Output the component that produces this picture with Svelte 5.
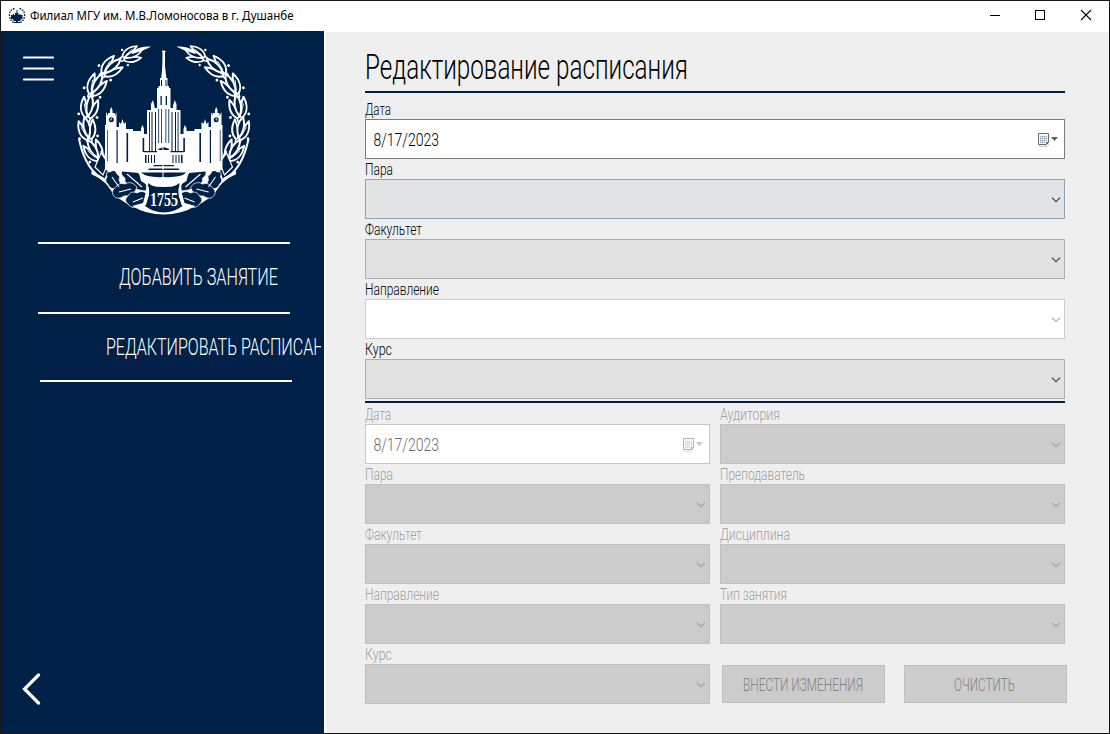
<script>
  const mainFields = [
    { label: 'Дата', w: 26, kind: 'date' },
    { label: 'Пара', w: 28, kind: 'focus' },
    { label: 'Факультет', w: 57, kind: 'normal' },
    { label: 'Направление', w: 74, kind: 'empty' },
    { label: 'Курс', w: 27, kind: 'normal' }
  ];
  const leftFields = [
    { label: 'Дата', w: 26, kind: 'date off' },
    { label: 'Пара', w: 28, kind: 'off' },
    { label: 'Факультет', w: 57, kind: 'off' },
    { label: 'Направление', w: 74, kind: 'off' },
    { label: 'Курс', w: 27, kind: 'off' }
  ];
  const rightFields = [
    { label: 'Аудитория', w: 60, kind: 'off' },
    { label: 'Преподаватель', w: 85, kind: 'off' },
    { label: 'Дисциплина', w: 70, kind: 'off' },
    { label: 'Тип занятия', w: 67, kind: 'off' }
  ];
  // x, y, rotation and scale of every laurel sprig of one half of the wreath
  const sprigs = [
    [122, 59, 66, 0.95],
    [102, 75.5, 48, 1.1],
    [90.5, 96, 27, 1.1],
    [87.5, 119.5, 8, 1.1],
    [89.5, 141, -12, 1.08],
    [100, 161, -31, 1.08]
  ];
</script>

{#snippet line(text, x, y, w, size, h)}
  <svg class="line" width={x + w + 2} height={h}>
    <text {x} {y} font-size={size} textLength={w} lengthAdjust="spacingAndGlyphs">{text}</text>
  </svg>
{/snippet}

{#snippet field(f)}
  <div class="field {f.kind}">
    <div class="label">{@render line(f.label, 0, 15.7, f.w, 17, 20)}</div>
    <div class="box">
      {#if f.kind.startsWith('date')}
        {@render line('8/17/2023', 7.5, 26, 65.5, 18, 38)}
        <svg class="cal" width="22" height="16" viewBox="0 0 22 16">
          <path d="M2 14.2h8l2-2" stroke="#bbb" fill="none" />
          <path d="M1.5 1.5h10v9l-2 2h-8z" fill="#f4f6f8" stroke="#75696a" />
          <path d="M9 13v-3h3z" fill="#75696a" />
          <path d="M3 4.5h7M3 6.5h7M3 8.5h7M3 10.5h5M3.5 4v7M5.5 4v7M7.5 4v7M9.5 4v5" stroke="#aebccb" stroke-width=".9" />
          <path class="arrow" d="M14 5h7l-3.5 4z" />
        </svg>
      {:else}
        <svg class="chev" width="10" height="6" viewBox="0 0 10 6"><path d="M1 .7l4 4 4-4" /></svg>
      {/if}
    </div>
  </div>
{/snippet}

{#snippet half()}
  {#each sprigs as [x, y, r, s]}
    <g transform="translate({x} {y}) rotate({r}) scale({s})" stroke-linejoin="round">
      <path d="M0 0C-8-4-9-12-6-20C-2-14-1-7 0 0ZM0 0C8-4 9-11 7-19C3-14 1-7 0 0Z" fill="#002147" stroke="#fff" stroke-width="1.8" />
      <path d="M-2-5L-5-14" stroke="#fff" stroke-width=".8" />
      <path d="M0-3C-4-10-3-17 0-23C4-17 4-10 0-3Z" fill="#002147" stroke="#fff" stroke-width="1.8" />
      <circle r="3" fill="#fff" /><circle r="1.5" fill="#002147" />
      <circle cx="-8.600" cy="-4" r="1.300" fill="#fff" /><circle cx="8.300" cy="-3" r="1.300" fill="#fff" />
    </g>
  {/each}
  <path d="M132 51Q142 46 151 46.7Q143 51 132 54Z" fill="#fff" />
  <path d="M79 139Q84 163 96 174T118 190" fill="none" stroke="#fff" stroke-width="2" />
  <path d="M101 151L107 161L116 170" fill="none" stroke="#fff" stroke-width="2" />
  <path d="M101 153L95 167L103 175L108 163Z" fill="#002147" stroke="#fff" stroke-width="1.2" />
  <circle cx="93" cy="172.500" r="1.7" fill="#fff" />
  <path d="M92 173Q103 178 110 184Q116 189 124 191" fill="none" stroke="#fff" stroke-width="3" />
  <path d="M108 169H141L150 190L146 205L132 207L115 196L104 181Z" fill="#fff" />
  <g fill="#002147" stroke="#fff" stroke-width=".7">
    <path d="M120 189Q109 190 108 184Q104 181 107 177Q105 171 110 172Q115 168 117 174Q121 176 119 180Q122 184 120 189Z" />
    <path d="M146 191Q133 190 130 184Q124 184 125 178Q120 175 122 170Q127 166 132 170Q138 168 139 174Q145 176 143 180Q148 184 146 191Z" />
    <path d="M137 187Q134 197 124 196Q117 201 113 195Q111 190 116 187Q119 182 125 184Q131 180 137 187Z" />
    <path d="M148 195Q146 206 138 207Q131 209 128 204Q123 200 128 196Q131 190 137 193Q143 189 148 195Z" />
  </g>
  <path d="M112 177L119 187M127 174L142 187M119 192L131 189M133 202L143 198" stroke="#fff" stroke-width="1.100" />
  <path d="M132 206Q146 214.500 164 214.500V212.500Q153 212 145 206L149 195L146 192L143 203Z" fill="#fff" />

  <!-- facade -->
  <path d="M105 170V125H106V112L108 116V113H110V110L111.300 107L112.500 110V113H115V116L116.500 112V127H119V122L121 124L122.500 119L124 124L126 122V129H133V131H141V128L142.700 125L144 129V134H147V110H151V104L153 100L154.500 106V108H157V88H158.500V86H160V78H161.200L162.500 66L163.300 52H162V50.700H165V187H164Q148 187 141 181L139 173Z" fill="#fff" />
  <g fill="#002147">
    <circle cx="111.300" cy="119.700" r="2.500" />
    <path d="M116.500 130h1.200v33h-1.200zM107 130h.7v31h-.7zM126.500 133h1.600v29h-1.600zM142.600 138h1.600v14h-1.600zM149 112h.9v39h-.9zM151.500 112h1v39h-1zM155 112h1v39h-1zM158.300 109h.8v34h-.8zM161.200 109h.8v34h-.8zM160.500 96h1.300v9h-1.300zM161 80h1v6h-1z" />
    <path d="M144 151h13v1.200h-13zM145 155h1.500v8H145zM148 155h1v8h-1zM151 155h1v8h-1zM154 155h1v8h-1z" />
    <path d="M158 149l6-2v3h-5zM154 165h10v1.200h-11zM149 168.500h15v1.500h-16zM141 172.500h23v4.500q-17 1-23-4.500zM148 183Q155 188.500 164 188.500V209Q155 209 147 206Q151 196 148 183Z" />
  </g>
  <path d="M111.300 118v2h-1.300" fill="none" stroke="#fff" stroke-width=".7" />
{/snippet}

<div class="window">
  <header>
    <svg class="appicon" width="18" height="17" viewBox="0 0 18 17" fill="#002147">
      <path d="M8.500 3h1v3h1v2h1V7h1v1h2v4H3V8h2V7h1v1h1V6h1.500zM4 12h10l-2 1 1 1h-3v1h2v1H6v-1h2v-1H5l1-1z" />
      <path d="M6.500 1.500Q1 3 1.500 9Q2 14 6 15.500M11.500 1.500Q17 3 16.500 9Q16 14 12 15.500" fill="none" stroke="#002147" stroke-width="1.300" stroke-dasharray="1.600 1.100" />
    </svg>
    <div class="apptitle">{@render line('Филиал МГУ им. М.В.Ломоносова в г. Душанбе', 2, 19, 263.5, 12, 30)}</div>
    <svg class="controls" width="120" height="30" viewBox="989 1 120 30" fill="none" stroke="#000">
      <path d="M990 15.500h10M1035.500 10.500h9v9h-9z" shape-rendering="crispEdges" />
      <path d="M1081 10l10 10M1091 10l-10 10" stroke-width="1.100" />
    </svg>
  </header>
  <div class="body">
    <aside>
      <div class="top">
        <svg class="burger" width="31" height="25" viewBox="0 0 31 25" stroke="#fff" stroke-width="2.2" stroke-linecap="round">
          <path d="M1 1.500h29M1 12.500h29M1 23.500h29" />
        </svg>
        <svg class="logo" width="175" height="173" viewBox="76 44 175 173">
          {@render half()}
          <g transform="translate(327.5 0) scale(-1 1)">{@render half()}</g>
          <text x="150" y="206" font-size="18" textLength="28" lengthAdjust="spacingAndGlyphs">1755</text>
        </svg>
      </div>
      <nav>
        <div class="item">{@render line('ДОБАВИТЬ ЗАНЯТИЕ', 81, 41, 159, 24, 68)}</div>
        <div class="item">{@render line('РЕДАКТИРОВАТЬ РАСПИСАНИЕ', 68, 41, 239, 24, 66)}</div>
        <div class="rule"></div>
      </nav>
      <svg class="back" width="20" height="34" viewBox="0 0 20 34" fill="none" stroke="#fff" stroke-width="3.2" stroke-linecap="round">
        <path d="M16.500 3L2.500 17L16.500 31" />
      </svg>
    </aside>
    <main>
      <h1>{@render line('Редактирование расписания', 0, 48, 323, 35, 60)}</h1>
      <section class="primary">
        {#each mainFields as f}{@render field(f)}{/each}
      </section>
      <section class="edit">
        <div>{#each leftFields as f}{@render field(f)}{/each}</div>
        <div>
          {#each rightFields as f}{@render field(f)}{/each}
          <div class="buttons">
            <button disabled>{@render line('ВНЕСТИ ИЗМЕНЕНИЯ', 1, 24.5, 120, 18, 36)}</button>
            <button disabled>{@render line('ОЧИСТИТЬ', 0, 24.5, 61, 18, 36)}</button>
          </div>
        </div>
      </section>
    </main>
  </div>
</div>

<style>
  :global(body) { margin: 0; }
  .window {
    box-sizing: border-box;
    width: 1110px;
    height: 734px;
    border: 1px solid #181818;
    background: #fff;
    display: flex;
    flex-direction: column;
    overflow: hidden;
    font-family: Roboto, "Liberation Sans", sans-serif;
    color: #000;
  }
  svg { display: block; flex: none; }
  .line { overflow: visible; fill: currentColor; }
  header { height: 30px; display: flex; }
  .appicon { margin: 6px 0 0 7px; }
  .apptitle { margin-left: 2px; font-family: "Noto Sans", "Open Sans", sans-serif; }
  .controls { margin-left: auto; }
  .body { flex: 1; display: flex; min-height: 0; }
  aside {
    width: 323px;
    background: #002147;
    color: #fff;
    display: flex;
    flex-direction: column;
    margin-right: 2px;
  }
  .top { display: flex; height: 211px; }
  .burger { margin: 25px 0 0 22px; }
  .logo { margin: 13px 0 0 22px; }
  .logo text { fill: #fff; font-family: "Liberation Serif", serif; font-weight: bold; }
  nav { width: 283px; margin-left: 37px; overflow: hidden; font-weight: 300; }
  .item::before, .rule { content: ""; display: block; width: 252px; height: 2px; background: #fff; }
  .rule { margin-left: 2px; }
  .back { margin: auto 0 27px 21px; }
  main { flex: 1; background: #efefef; padding: 0 44px 0 39px; margin-top: 1px; }
  h1 { margin: 0; height: 58px; width: 700px; border-bottom: 2px solid #002147; font-weight: 300; padding-top: 1px; }
  h1 svg { margin-top: -2px; }
  .primary { width: 700px; margin-top: 6px; padding-bottom: 2px; border-bottom: 2px solid #002147; font-weight: 350; }
  .edit { width: 700px; display: grid; grid-template-columns: 345px 345px; gap: 10px; margin-top: 1px; font-weight: 350; }
  .field { height: 60px; }
  .label { height: 20px; }
  .box {
    box-sizing: border-box;
    height: 40px;
    border: 1px solid #acacac;
    background: #e1e1e1;
    display: flex;
    align-items: center;
  }
  .date .box { background: #fff; border-color: #7a7a7a; }
  .focus .box { background: #e2e4e6; border-color: #8ca3b6; }
  .empty .box { background: #fff; border-color: #ccc; }
  .off .label { color: #a0a0a0; }
  .off .box { background: #ccc; border-color: #bfbfbf; }
  .date.off .box { background: #fff; border-color: #c6c6c6; color: #6d6d6d; }
  .chev { margin: 2px 3px 0 auto; fill: none; stroke: #505050; stroke-width: 1.3; }
  .empty .chev { stroke: #b5b5b5; }
  .off .chev { stroke: #a6a6a6; }
  .cal { margin: 1px 5px 0 auto; }
  .arrow { fill: #46618c; }
  .off .cal { opacity: .5; }
  .off .arrow { fill: #90908a; }
  .buttons { display: flex; gap: 19px; padding: 21px 0 0 2px; }
  button {
    flex: none;
    box-sizing: border-box;
    width: 163px;
    height: 38px;
    padding: 0;
    border: 1px solid #bfbfbf;
    background: #ccc;
    color: #838383;
    display: flex;
    justify-content: center;
    font-family: inherit;
    font-weight: 350;
  }
</style>
